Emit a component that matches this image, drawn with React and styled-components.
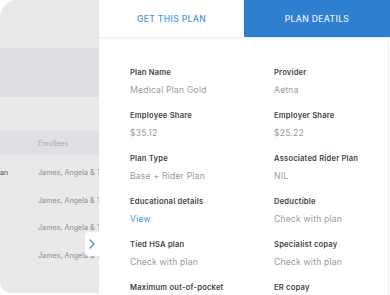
import React from "react";
import styled, { createGlobalStyle } from "styled-components";

const Global = createGlobalStyle`
  html, body { margin: 0; padding: 0; background: #fff; }
  body { font-family: "Inter", "Noto Sans", sans-serif; }
  * { box-sizing: border-box; }
`;

const Page = styled.div`
  position: relative;
  width: 390px;
  height: 295px;
  overflow: hidden;
  display: flex;
  background: #fff;
`;

const Backdrop = styled.div`
  width: 99px;
  height: 293px;
  flex: none;
  display: flex;
  flex-direction: column;
  background: #e9e9e9;
  border-radius: 18px 0 0 11px;
  overflow: hidden;
`;

const Band = styled.div`
  height: ${(p) => p.$h}px;
  flex: none;
  background: ${(p) => p.$bg};
`;

const TableHead = styled.div`
  height: 24px;
  flex: none;
  background: #dfe0e3;
  display: flex;
  align-items: center;
  padding-left: 38px;
  font-size: 7px;
  color: #a9aaad;
  white-space: nowrap;
`;

const TableRows = styled.div`
  display: flex;
  flex-direction: column;
  padding-top: 4px;
`;

const TableRow = styled.div`
  height: 27.5px;
  flex: none;
  display: flex;
  align-items: center;
  white-space: nowrap;
  font-size: 7.2px;
  color: #8c8c8c;
`;

const Cell = styled.span`
  width: ${(p) => p.$w}px;
  flex: none;
  color: ${(p) => p.$c || "inherit"};
  overflow: hidden;
`;

const Panel = styled.div`
  flex: 1;
  min-width: 0;
  display: flex;
  flex-direction: column;
  background: #fff;
`;

const Tabs = styled.div`
  flex: none;
  display: grid;
  grid-template-columns: 145px 1fr;
  height: 38px;
  border-bottom: 1px solid #f0f0f0;
  box-shadow: 0 1px 2px rgba(0, 0, 0, 0.04);
`;

const Tab = styled.div`
  display: flex;
  align-items: center;
  justify-content: center;
  font-size: 8.6px;
  font-weight: 500;
  letter-spacing: 0.35px;
  background: ${(p) => (p.$active ? "#2f7fd0" : "#fff")};
  color: ${(p) => (p.$active ? "#eef5fd" : "#3f94ec")};
`;

const Body = styled.div`
  flex: 1;
  min-height: 0;
  overflow: hidden;
  border-right: 1px solid #eeeeee;
  margin-right: 1px;
  padding: 30px 0 0 31px;
  display: grid;
  grid-template-columns: 144px 1fr;
  grid-auto-rows: 43px;
`;

const Field = styled.div`
  display: flex;
  flex-direction: column;
  gap: 8px;
`;

const Label = styled.div`
  font-size: 7.6px;
  font-weight: 600;
  color: #444;
  letter-spacing: 0.2px;
  white-space: nowrap;
`;

const Value = styled.div`
  font-size: 8.6px;
  color: ${(p) => (p.$link ? "#3f94ec" : "#9a9a9a")};
  letter-spacing: 0.2px;
  white-space: nowrap;
`;

const Toggle = styled.div`
  position: absolute;
  left: 85px;
  top: 232px;
  width: 14px;
  height: 24px;
  background: #fff;
  border-radius: 4px 0 0 4px;
  display: flex;
  align-items: center;
  justify-content: center;
`;

const fields = [
  ["Plan Name", "Medical Plan Gold"],
  ["Provider", "Aetna"],
  ["Employee Share", "$35.12"],
  ["Employer Share", "$25.22"],
  ["Plan Type", "Base + Rider Plan"],
  ["Associated Rider Plan", "NIL"],
  ["Educational details", "View", true],
  ["Deductible", "Check with plan"],
  ["Tied HSA plan", "Check with plan"],
  ["Specialist copay", "Check with plan"],
  ["Maximum out-of-pocket", "Check with plan"],
  ["ER copay", "Check with plan"],
];

export default function App() {
  return (
    <>
      <Global />
      <Page>
        <Backdrop>
          <Band $h={48} $bg="#e8e8e8" />
          <Band $h={49} $bg="#dcdde0" />
          <Band $h={34} $bg="#e9e9e9" />
          <TableHead>Enrollees</TableHead>
          <TableRows>
            {[0, 1, 2, 3].map((i) => (
              <TableRow key={i}>
                <Cell $w={38} $c="#555">{i === 0 ? "an" : ""}</Cell>
                <Cell $w={61}>James, Angela &amp; T</Cell>
              </TableRow>
            ))}
          </TableRows>
        </Backdrop>
        <Panel>
          <Tabs>
            <Tab>GET THIS PLAN</Tab>
            <Tab $active>PLAN DEATILS</Tab>
          </Tabs>
          <Body>
            {fields.map(([l, v, link]) => (
              <Field key={l}>
                <Label>{l}</Label>
                <Value $link={link}>{v}</Value>
              </Field>
            ))}
          </Body>
        </Panel>
        <Toggle>
          <svg width="6" height="10" viewBox="0 0 6 10">
            <path d="M1 1l4 4-4 4" fill="none" stroke="#3f94ec" strokeWidth="1.3" strokeLinecap="round" strokeLinejoin="round" />
          </svg>
        </Toggle>
      </Page>
    </>
  );
}
